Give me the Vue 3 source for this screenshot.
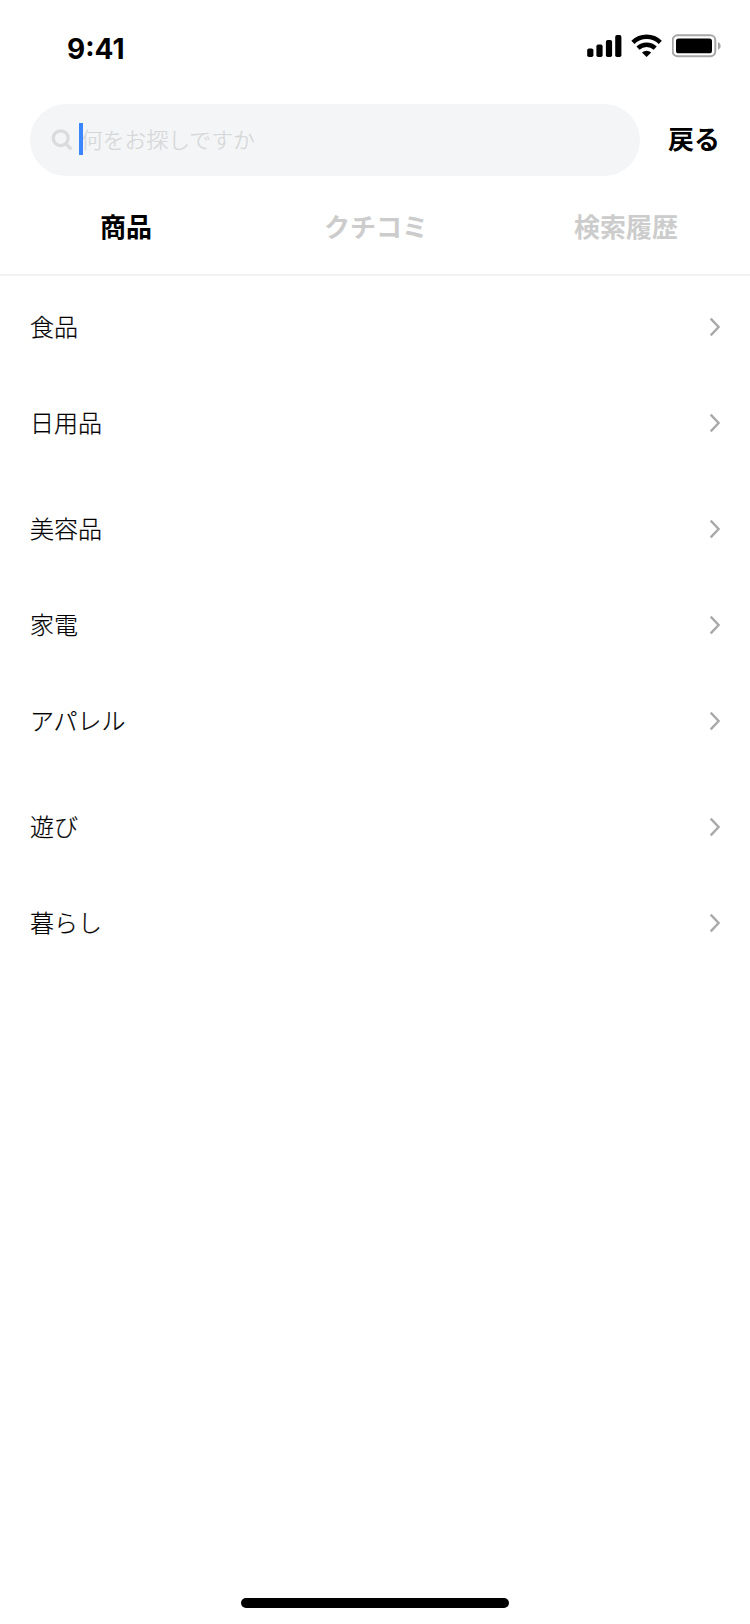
<template>
  <div class="screen">
    <div class="status-bar">
      <span class="status-time">9:41</span>
      <div class="status-icons">
        <svg class="icon-signal" width="36" height="24" viewBox="0 0 36 24">
          <rect x="1.2" y="14.5" width="6.2" height="8.5" rx="1.8" />
          <rect x="10.4" y="10.4" width="6.2" height="12.6" rx="1.8" />
          <rect x="19.9" y="5.9" width="6.2" height="17.1" rx="1.8" />
          <rect x="29.2" y="1.1" width="6.2" height="21.9" rx="1.8" />
        </svg>
        <svg class="icon-wifi" width="32" height="24" viewBox="0 0 32 24">
          <path d="M1.9 8.4a19.6 19.6 0 0 1 27.4 0" fill="none" stroke="#000" stroke-width="4.4" />
          <path d="M7 14.2a12.4 12.4 0 0 1 17.2 0" fill="none" stroke="#000" stroke-width="4.4" />
          <path d="M15.6 23l-4.6-4.4a6.8 6.8 0 0 1 9.2 0z" />
        </svg>
        <svg class="icon-battery" width="50" height="24" viewBox="0 0 50 24">
          <rect x="0.7" y="1.3" width="42.6" height="21" rx="5" fill="none" stroke="#a6a6a6" stroke-width="2" />
          <rect x="4" y="4.5" width="36" height="14.8" rx="2.6" />
          <path d="M46 8a4.3 4.3 0 0 1 0 8z" fill="#a6a6a6" />
        </svg>
      </div>
    </div>

    <div class="search-header">
      <label class="search-box">
        <svg class="icon-search" width="22" height="24" viewBox="0 0 22 24" fill="none" stroke="#dadbdb" stroke-width="3.2">
          <circle cx="9.7" cy="10.2" r="7.4" />
          <line x1="14.7" y1="15.5" x2="20.3" y2="21.3" />
        </svg>
        <span class="caret"></span>
        <span class="placeholder">何をお探しですか</span>
      </label>
      <button class="back-button">戻る</button>
    </div>

    <div class="tabs">
      <button
        v-for="tab in tabs"
        :key="tab"
        class="tab"
        :class="{ active: tab === activeTab }"
        @click="activeTab = tab"
      >
        {{ tab }}
      </button>
    </div>

    <div class="category-list">
      <ul v-for="(group, index) in groups" :key="index" class="category-group">
        <li v-for="name in group" :key="name" class="category-item">
          <span class="category-name">{{ name }}</span>
          <svg width="12" height="20" viewBox="0 0 12 20" fill="none" stroke="#a9a9a9" stroke-width="2.4">
            <path d="M1.7 1.6l7.9 8.4-7.9 8.4" />
          </svg>
        </li>
      </ul>
    </div>

    <div class="home-indicator"></div>
  </div>
</template>

<script setup>
import { ref } from 'vue'

const tabs = ['商品', 'クチコミ', '検索履歴']
const activeTab = ref('商品')

const groups = [
  ['食品', '日用品'],
  ['美容品', '家電', 'アパレル'],
  ['遊び', '暮らし']
]
</script>

<style>
body {
  margin: 0;
  background: #fff;
}
</style>

<style scoped>
.screen {
  display: flex;
  flex-direction: column;
  box-sizing: border-box;
  width: 750px;
  height: 1624px;
  padding-bottom: 16px;
  background: #fff;
  color: #000;
  font-family: "Noto Sans CJK JP", sans-serif;
  overflow: hidden;
}

button {
  padding: 0;
  border: none;
  background: none;
  font-family: inherit;
  cursor: pointer;
}

.status-bar {
  display: flex;
  justify-content: space-between;
  box-sizing: border-box;
  height: 104px;
  padding: 34px 28px 0 67px;
}

.status-time {
  height: 32px;
  font-family: Inter, sans-serif;
  font-size: 28px;
  font-weight: 700;
  line-height: 30px;
}

.status-icons {
  display: flex;
  gap: 9px;
  height: 24px;
}

.search-header {
  display: flex;
  align-items: center;
  height: 72px;
  padding-left: 30px;
}

.search-box {
  display: flex;
  align-items: center;
  box-sizing: border-box;
  width: 610px;
  height: 72px;
  padding-left: 21px;
  border-radius: 36px;
  background: #f3f5f7;
}

.caret {
  width: 4px;
  height: 32px;
  margin: 0 -2px 2px 6px;
  background: #3a86ff;
  z-index: 1;
}

.placeholder {
  padding-bottom: 3px;
  color: #d6d7d7;
  font-size: 21.8px;
  font-weight: 300;
  line-height: 32px;
  -webkit-text-stroke: 0.2px currentColor;
}

.back-button {
  height: 40px;
  margin-left: 28px;
  padding-bottom: 4px;
  color: #000;
  font-size: 26px;
  font-weight: 600;
  line-height: 36px;
}

.tabs {
  display: flex;
  height: 98px;
  border-bottom: 2px solid #f1f2f3;
}

.tab {
  flex: 1;
  height: 98px;
  padding-left: 2px;
  color: #ccc;
  font-size: 26px;
  font-weight: 600;
  line-height: 100px;
}

.tab.active {
  color: #000;
}

.category-list {
  display: flex;
  flex: 1;
  flex-direction: column;
  gap: 10px;
  padding-top: 3px;
}

.category-group {
  margin: 0;
  padding: 0;
  list-style: none;
}

.category-item {
  display: flex;
  align-items: center;
  justify-content: space-between;
  height: 96px;
  padding: 0 29px 0 30px;
  font-size: 24px;
  font-weight: 300;
  line-height: 36px;
}

.category-name {
  padding-bottom: 2px;
  -webkit-text-stroke: 0.2px currentColor;
}

.home-indicator {
  align-self: center;
  width: 268px;
  height: 10px;
  border-radius: 5px;
  background: #000;
}
</style>
